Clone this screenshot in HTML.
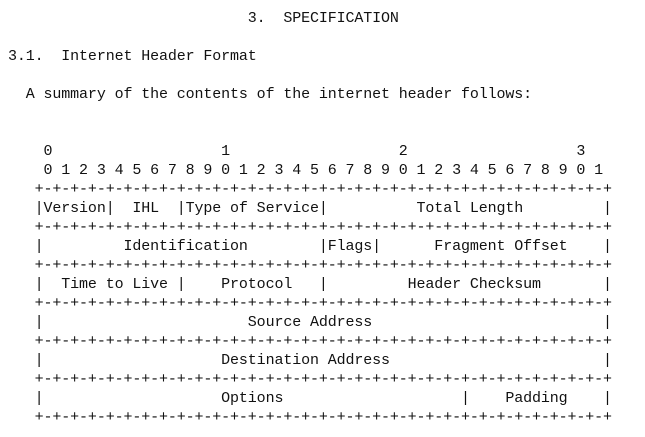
<!DOCTYPE html>
<html><head><meta charset="utf-8"><style>
html,body{margin:0;padding:0;background:#fff;width:645px;height:437px;overflow:hidden}
pre{margin:0;padding:9px 0 0 8px;font-family:"Liberation Mono",monospace;font-size:15px;letter-spacing:-0.12px;line-height:19px;color:#111}
</style></head><body><pre>                           3.  SPECIFICATION

3.1.  Internet Header Format

  A summary of the contents of the internet header follows:


    0                   1                   2                   3
    0 1 2 3 4 5 6 7 8 9 0 1 2 3 4 5 6 7 8 9 0 1 2 3 4 5 6 7 8 9 0 1
   +-+-+-+-+-+-+-+-+-+-+-+-+-+-+-+-+-+-+-+-+-+-+-+-+-+-+-+-+-+-+-+-+
   |Version|  IHL  |Type of Service|          Total Length         |
   +-+-+-+-+-+-+-+-+-+-+-+-+-+-+-+-+-+-+-+-+-+-+-+-+-+-+-+-+-+-+-+-+
   |         Identification        |Flags|      Fragment Offset    |
   +-+-+-+-+-+-+-+-+-+-+-+-+-+-+-+-+-+-+-+-+-+-+-+-+-+-+-+-+-+-+-+-+
   |  Time to Live |    Protocol   |         Header Checksum       |
   +-+-+-+-+-+-+-+-+-+-+-+-+-+-+-+-+-+-+-+-+-+-+-+-+-+-+-+-+-+-+-+-+
   |                       Source Address                          |
   +-+-+-+-+-+-+-+-+-+-+-+-+-+-+-+-+-+-+-+-+-+-+-+-+-+-+-+-+-+-+-+-+
   |                    Destination Address                        |
   +-+-+-+-+-+-+-+-+-+-+-+-+-+-+-+-+-+-+-+-+-+-+-+-+-+-+-+-+-+-+-+-+
   |                    Options                    |    Padding    |
   +-+-+-+-+-+-+-+-+-+-+-+-+-+-+-+-+-+-+-+-+-+-+-+-+-+-+-+-+-+-+-+-+
</pre></body></html>
